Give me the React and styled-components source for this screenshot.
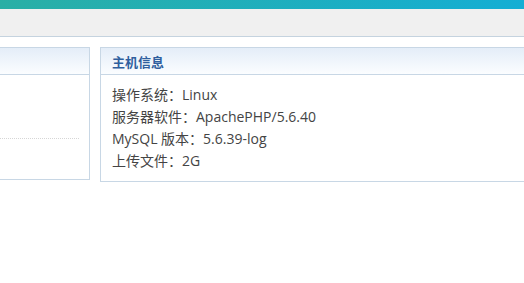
import React from "react";
import styled, { createGlobalStyle } from "styled-components";

const Global = createGlobalStyle`
  html, body { margin: 0; padding: 0; background: #fff; }
  body { overflow: hidden; font-family: "Open Sans", "Noto Sans CJK SC", sans-serif; }
`;

const Page = styled.div`
  width: 524px;
  height: 283px;
  overflow: hidden;
  background: #fff;
`;

const TopBar = styled.div`
  height: 9px;
  background: linear-gradient(90deg, #2aafa5 0%, #14aed4 100%);
`;

const SubBar = styled.div`
  height: 27px;
  background: #f0f0f0;
  border-bottom: 1px solid #c5d3df;
`;

const Row = styled.div`
  display: grid;
  grid-template-columns: 390px 600px;
  column-gap: 10px;
  align-items: start;
  margin: 10px 0 0 -300px;
`;

const Panel = styled.section`
  border: 1px solid #c8d7e5;
  background: #fff;
  box-sizing: border-box;
  height: ${(p) => p.$h}px;
`;

const PanelHead = styled.div`
  height: 26px;
  border-bottom: 1px solid #c8d7e5;
  background: linear-gradient(180deg, #e4edf8 0%, #fbfdff 100%);
  display: flex;
  align-items: center;
  padding-left: 11px;
  font-family: "Noto Sans CJK SC", sans-serif;
  font-size: 13px;
  font-weight: bold;
  color: #2f5f9e;
`;

const PanelBody = styled.div`
  padding: 9px 11px 8px;
  font-size: 14px;
  line-height: 22px;
  color: #444;
`;

const DottedLine = styled.div`
  margin: 63px 10px 0 0;
  border-top: 1px dotted #d6d6d6;
`;

const Line = styled.div`
  white-space: nowrap;
`;

export default function App() {
  const info = [
    "操作系统：Linux",
    "服务器软件：ApachePHP/5.6.40",
    "MySQL 版本：5.6.39-log",
    "上传文件：2G",
  ];
  return (
    <Page>
      <Global />
      <TopBar />
      <SubBar />
      <Row>
        <Panel $h={133}>
          <PanelHead />
          <DottedLine />
        </Panel>
        <Panel $h={135}>
          <PanelHead>主机信息</PanelHead>
          <PanelBody>
            {info.map((t) => (
              <Line key={t}>{t}</Line>
            ))}
          </PanelBody>
        </Panel>
      </Row>
    </Page>
  );
}
